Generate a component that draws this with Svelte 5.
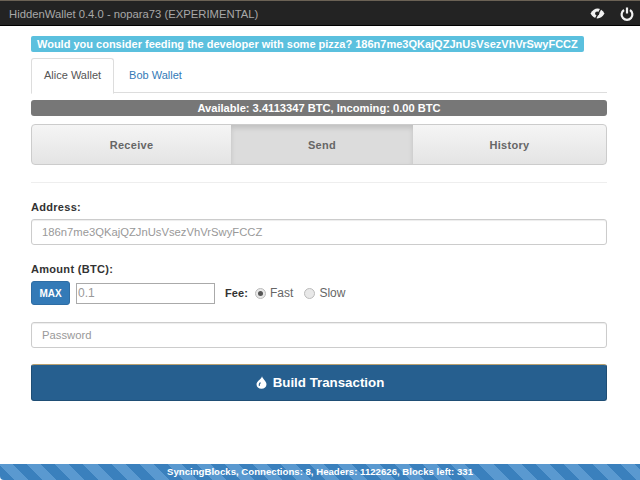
<script>
  const tabs = ["Receive", "Send", "History"];
  const address = "186n7me3QKajQZJnUsVsezVhVrSwyFCCZ";
</script>

<div class="window">
  <header class="titlebar">
    <span class="title">HiddenWallet 0.4.0 - nopara73 (EXPERIMENTAL)</span>
    <div class="title-icons">
      <svg width="15" height="13" viewBox="0 0 15 13">
        <path d="M0.5 6.5 C2.5 3.2 5 1.6 7.5 1.6 C10 1.6 12.5 3.2 14.5 6.5 C12.5 9.8 10 11.4 7.5 11.4 C5 11.4 2.5 9.8 0.5 6.5 Z" fill="#f2f2f2" />
        <circle cx="7.2" cy="6.5" r="2.1" fill="#232323" />
        <path d="M11.5 0.5 L5 12.5" stroke="#232323" stroke-width="1.4" />
      </svg>
      <svg width="14" height="14" viewBox="0 0 14 14">
        <path d="M4 3 A5.4 5.4 0 1 0 10 3" fill="none" stroke="#f2f2f2" stroke-width="2.2" />
        <path d="M7 0.5 V6.5" stroke="#f2f2f2" stroke-width="2.2" />
      </svg>
    </div>
  </header>

  <main class="content">
    <div class="promo"><span>Would you consider feeding the developer with some pizza? {address}</span></div>

    <ul class="wallet-tabs">
      <li class="active">Alice Wallet</li>
      <li>Bob Wallet</li>
    </ul>

    <div class="balance">Available: 3.4113347 BTC, Incoming: 0.00 BTC</div>

    <nav class="modes">
      {#each tabs as tab}
        <div class="mode {tab === 'Send' ? 'selected' : ''}">{tab}</div>
      {/each}
    </nav>

    <hr />

    <label class="field-label" for="address">Address:</label>
    <input id="address" class="text-input" placeholder={address} />

    <label class="field-label amount-label" for="amount">Amount (BTC):</label>
    <div class="amount-row">
      <button class="max">MAX</button>
      <input id="amount" class="amount" placeholder="0.1" />
      <span class="fee-label">Fee:</span>
      <span class="radio checked"></span><span class="radio-text">Fast</span>
      <span class="radio"></span><span class="radio-text">Slow</span>
    </div>

    <input class="text-input password" placeholder="Password" />

    <button class="build">
      <svg width="11" height="13" viewBox="0 0 10 12">
        <path d="M5.5 0.3 C5.8 2.6 9.6 4.6 9.6 7.6 C9.6 10.2 7.6 11.7 5 11.7 C2.4 11.7 0.4 10.2 0.4 7.6 C0.4 5 4.6 3.2 5.5 0.3 Z" fill="#fff" />
        <path d="M4 6 C3 7 2.6 8 3 9.2" fill="none" stroke="#265f8f" stroke-width="1" />
      </svg>
      Build Transaction
    </button>
  </main>

  <footer class="status">SyncingBlocks, Connections: 8, Headers: 1122626, Blocks left: 331</footer>
</div>

<style>
  :global(body) {
    margin: 0;
    background: #fff;
  }

  .window {
    width: 640px;
    height: 480px;
    display: flex;
    flex-direction: column;
    font-family: "Liberation Sans", Arial, sans-serif;
    color: #333;
    overflow: hidden;
  }

  .titlebar {
    height: 26px;
    flex: none;
    box-sizing: border-box;
    display: flex;
    align-items: center;
    justify-content: space-between;
    padding: 1px 3px 0 9px;
    background: #232323;
    border-top: 1px solid #6b6255;
    border-bottom: 1px solid #000;
  }

  .title {
    font-size: 11.27px;
    color: #a8a8a8;
  }

  .title-icons {
    display: flex;
    align-items: center;
    gap: 15px;
    padding-right: 3px;
  }

  .content {
    flex: 1;
    display: flex;
    flex-direction: column;
    padding: 10px 33px 0 31px;
    min-height: 0;
  }

  .promo {
    display: flex;
    height: 16px;
  }

  .promo span {
    background: #5bc0de;
    color: #fff;
    font-size: 11px;
    font-weight: bold;
    line-height: 16px;
    padding: 0 6px;
    border-radius: 2px;
    white-space: nowrap;
  }

  .wallet-tabs {
    display: flex;
    list-style: none;
    margin: 6px 0 0;
    padding: 0;
    height: 34px;
    border-bottom: 1px solid #ddd;
    font-size: 11px;
  }

  .wallet-tabs li {
    padding: 0 14px 0 15px;
    line-height: 34px;
    color: #337ab7;
  }

  .wallet-tabs li.active {
    height: 34px;
    padding: 0 12px;
    color: #555;
    background: #fff;
    border: 1px solid #ddd;
    border-bottom-color: #fff;
    border-radius: 3px 3px 0 0;
    box-sizing: content-box;
    line-height: 33px;
    margin-bottom: -1px;
  }

  .balance {
    margin-top: 7px;
    height: 16px;
    line-height: 16px;
    background: #777;
    color: #fff;
    font-size: 11.13px;
    font-weight: bold;
    text-align: center;
    border-radius: 3px;
  }

  .modes {
    margin-top: 8px;
    height: 41px;
    flex: none;
    box-sizing: border-box;
    display: grid;
    grid-template-columns: 199px 182px 1fr;
    border: 1px solid #ccc;
    border-radius: 4px;
    overflow: hidden;
    background: linear-gradient(#f5f5f5, #e4e4e4);
  }

  .mode {
    display: flex;
    align-items: center;
    justify-content: center;
    font-size: 11px;
    font-weight: bold;
    letter-spacing: 0.3px;
    color: #666;
  }

  .mode.selected {
    background: #dcdcdc;
    box-shadow: inset 0 3px 5px rgba(0, 0, 0, 0.125);
  }

  hr {
    width: 100%;
    margin: 17px 0 0;
    border: none;
    border-top: 1px solid #eee;
  }

  .field-label {
    margin-top: 17px;
    font-size: 11px;
    font-weight: bold;
    letter-spacing: 0.3px;
    line-height: 14px;
    color: #333;
  }

  .text-input {
    height: 26px;
    flex: none;
    box-sizing: border-box;
    margin-top: 5px;
    padding: 0 10px;
    font: 11.25px "Liberation Sans", Arial, sans-serif;
    border: 1px solid #ccc;
    border-radius: 3px;
    box-shadow: inset 0 1px 1px rgba(0, 0, 0, 0.075);
  }

  .text-input::placeholder,
  .amount::placeholder {
    color: #999;
    opacity: 1;
  }

  .amount-label {
    margin-top: 17px;
  }

  .amount-row {
    display: flex;
    align-items: center;
    height: 24px;
    margin-top: 5px;
    font-size: 12px;
  }

  .max {
    width: 39px;
    height: 24px;
    padding: 0;
    background: #337ab7;
    border: 1px solid #2e6da4;
    border-radius: 3px;
    color: #fff;
    font: bold 10px "Liberation Sans", Arial, sans-serif;
  }

  .amount {
    width: 139px;
    height: 21px;
    box-sizing: border-box;
    margin-left: 6px;
    padding: 0 1px;
    font: 12px "Liberation Sans", Arial, sans-serif;
    border: 1px solid #aaa;
    border-radius: 0;
  }

  .fee-label {
    margin-left: 10px;
    font-size: 11px;
    font-weight: bold;
    letter-spacing: 0.1px;
  }

  .radio {
    width: 9px;
    height: 9px;
    margin-left: 7px;
    border: 1px solid #bbb;
    border-radius: 50%;
    background: #e8e8e8;
    flex: none;
    position: relative;
  }

  .radio.checked::after {
    content: "";
    position: absolute;
    inset: 2px;
    border-radius: 50%;
    background: #555;
  }

  .radio + .radio-text {
    margin-left: 4px;
    color: #666;
  }

  .radio-text + .radio {
    margin-left: 11px;
  }

  .password {
    margin-top: 17px;
  }

  .build {
    height: 37px;
    flex: none;
    margin-top: 16px;
    background: #265f8f;
    border: 1px solid #1f4e75;
    border-top-color: #b8a070;
    border-radius: 3px;
    color: #fff;
    font: bold 13.3px "Liberation Sans", Arial, sans-serif;
    display: flex;
    align-items: center;
    justify-content: center;
    gap: 6px;
    padding: 0 0 0 2px;
  }

  .status {
    flex: none;
    height: 16px;
    line-height: 16px;
    text-align: center;
    color: #fff;
    font-size: 9.65px;
    font-weight: bold;
    border-radius: 0 0 0 4px;
    background: repeating-linear-gradient(
      45deg,
      #3a80bd 0 10px,
      #5a99d0 10px 20px
    );
  }
</style>
